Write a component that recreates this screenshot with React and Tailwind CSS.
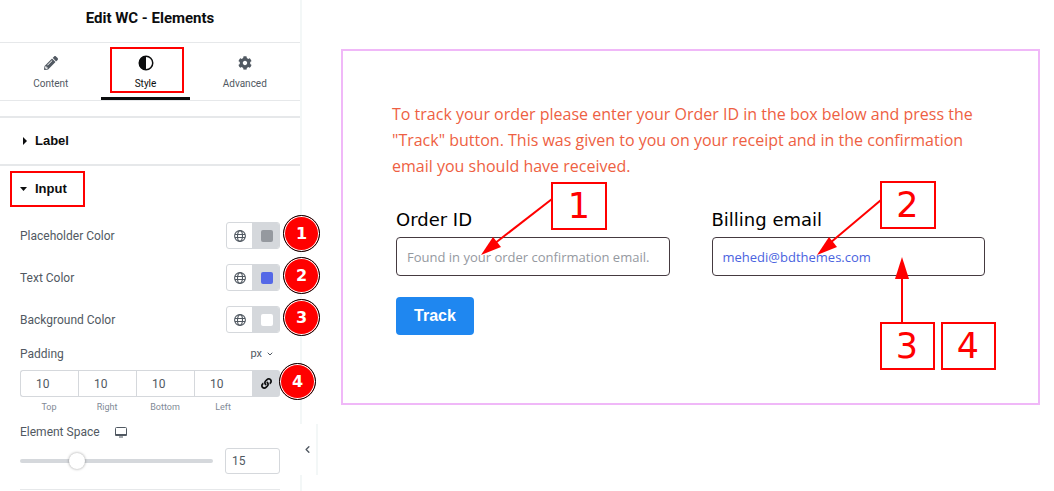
import { useState } from "react";
import { FaPencilAlt, FaCog, FaLink } from "react-icons/fa";
import { ChevronDown, ChevronLeft } from "lucide-react";

const colorControls = [
  { id: "placeholder", label: "Placeholder Color", color: "#95999f", badge: 1 },
  { id: "text", label: "Text Color", color: "#5468e7", badge: 2 },
  { id: "background", label: "Background Color", color: "#ffffff", badge: 3 },
];

const HalfCircle = () => (
  <svg width="16" height="16" viewBox="0 0 16 16" aria-hidden="true">
    <circle cx="8" cy="8" r="6.75" fill="none" stroke="currentColor" strokeWidth="1.5" />
    <path d="M8 1a7 7 0 0 0 0 14z" fill="currentColor" />
  </svg>
);

const Globe = () => (
  <svg width="12" height="12" viewBox="0 0 12 12" fill="none" stroke="currentColor" aria-hidden="true">
    <circle cx="6" cy="6" r="5.4" strokeWidth="1.1" />
    <ellipse cx="6" cy="6" rx="2.5" ry="5.4" strokeWidth="1.1" />
    <path d="M1 4.500h10M1 7.500h10" />
  </svg>
);

const Desktop = () => (
  <svg width="12" height="11" viewBox="0 0 12 11" aria-hidden="true">
    <path d="M1.500.5h9a1 1 0 0 1 1 1v7h-11v-7a1 1 0 0 1 1-1z" fill="none" stroke="currentColor" />
    <path d="M1 7h10v2H1zM4 9.500h4v1H4z" fill="currentColor" />
  </svg>
);

const Badge = ({ children, className }) => (
  <span
    className={`absolute -top-[7px] left-full z-10 flex size-[37px] items-center justify-center rounded-full border border-black bg-[#ff0000] font-['DejaVu_Sans'] text-base font-bold text-white ring-1 ring-inset ring-white ${className}`}
  >
    {children}
  </span>
);

const Callout = ({ children, className }) => (
  <span
    className={`absolute flex h-12 items-center justify-center border-2 border-[#ff0000] bg-white font-['DejaVu_Sans'] text-[35px] leading-none text-[#ff0000] ${className}`}
  >
    {children}
  </span>
);

const Tab = ({ icon, label, active, onClick }) => (
  <button
    type="button"
    onClick={onClick}
    className={`relative flex flex-auto flex-col items-center gap-[7px] border-b-3 pt-3 text-[10px] leading-3 ${
      active ? "border-[#0c0d0e] text-[#0c0d0e]" : "border-transparent text-[#515962]"
    }`}
  >
    <span className="flex h-4 items-center">{icon}</span>
    {label}
    {active && <span className="absolute top-1 left-[9px] h-[46px] w-[74px] border-2 border-[#ff0000]" />}
  </button>
);

const ColorControl = ({ id, label, color, badge }) => (
  <div className="relative flex items-center justify-between">
    <label htmlFor={id}>{label}</label>
    <div className="flex h-[27px] w-[54px] overflow-hidden rounded-[3px] border border-[#d5d8dc]">
      <button type="button" aria-label={`${label} globals`} className="flex flex-1 items-center justify-center">
        <Globe />
      </button>
      <button id={id} type="button" className="flex flex-1 items-center justify-center bg-[#d5d8dc] pl-0.5">
        <span className="size-3 rounded-xs" style={{ backgroundColor: color }} />
      </button>
    </div>
    <Badge className="ml-[3px]">{badge}</Badge>
  </div>
);

const Sidebar = () => {
  const [tab, setTab] = useState("Style");
  const [space, setSpace] = useState(15);
  const [padding, setPadding] = useState({ Top: 10, Right: 10, Bottom: 10, Left: 10 });

  const tabs = [
    { label: "Content", icon: <FaPencilAlt size={14} /> },
    { label: "Style", icon: <HalfCircle /> },
    { label: "Advanced", icon: <FaCog size={14} /> },
  ];

  return (
    <aside className="relative w-[302px] shrink-0 border-r-2 border-[#f3f7f7] text-xs text-[#515962]">
      <h1 className="border-b border-[#e6e8ea] pt-[5px] pb-[11px] text-center text-[15px] leading-[26px] font-bold text-[#0c0d0e]">
        Edit WC - Elements
      </h1>

      <nav className="flex h-[58px] border-b border-[#e6e8ea]">
        {tabs.map((t) => (
          <Tab key={t.label} {...t} active={tab === t.label} onClick={() => setTab(t.label)} />
        ))}
      </nav>

      <button
        type="button"
        className="mt-[15px] flex h-[50px] w-full items-center gap-2 border-y-2 border-[#e6e8ea] px-5 font-['Liberation_Sans'] text-[13px] font-bold text-[#0c0d0e]"
      >
        <svg width="7" height="8" viewBox="0 0 7 8" aria-hidden="true">
          <path d="M3 0l4 4-4 4z" fill="currentColor" />
        </svg>
        Label
      </button>

      <button
        type="button"
        className="relative flex h-[46px] w-full items-center gap-2 px-5 font-['Liberation_Sans'] text-[13px] font-bold text-[#0c0d0e]"
      >
        <svg width="7" height="8" viewBox="0 0 7 8" aria-hidden="true">
          <path d="M0 2h7L3.500 6z" fill="currentColor" />
        </svg>
        Input
        <span className="absolute left-2.5 h-9 w-[75px] border-2 border-[#ff0000]" />
      </button>

      <div className="px-5 pt-2.5">
        <div className="flex flex-col gap-[15px]">
          {colorControls.map((c) => (
            <ColorControl key={c.id} {...c} />
          ))}
        </div>

        <div className="mt-3 flex h-[18px] items-center justify-between">
          <span>Padding</span>
          <label className="relative text-[11px]">
            <select
              aria-label="Padding unit"
              className="field-sizing-content appearance-none bg-transparent pr-[18px] outline-none"
            >
              <option>px</option>
              <option>em</option>
              <option>%</option>
            </select>
            <ChevronDown
              size={8}
              strokeWidth={3}
              className="pointer-events-none absolute top-1/2 right-1.5 -translate-y-1/2"
            />
          </label>
        </div>
        <div className="relative mt-[7px] flex h-[27px]">
          <div className="flex flex-1 divide-x divide-[#d5d8dc] rounded-l-[3px] border border-r-0 border-[#d5d8dc]">
            {Object.keys(padding).map((side) => (
              <input
                key={side}
                id={`padding-${side}`}
                value={padding[side]}
                onChange={(e) => setPadding({ ...padding, [side]: e.target.value })}
                className="w-0 flex-1 pl-[15px] outline-none"
              />
            ))}
          </div>
          <button
            type="button"
            aria-label="Link values"
            className="flex w-7 items-center justify-center rounded-r-[3px] bg-[#d5d8dc] text-[#0c0d0e]"
          >
            <FaLink size={11} />
          </button>
          <Badge className="-ml-px">4</Badge>
        </div>
        <div className="mt-1 mr-7 flex text-center text-[9px] leading-3 text-[#818a96]">
          {Object.keys(padding).map((side) => (
            <label key={side} htmlFor={`padding-${side}`} className="flex-1">
              {side}
            </label>
          ))}
        </div>

        <div className="mt-2.5 flex h-[18px] items-center gap-[15px]">
          <label htmlFor="space">Element Space</label>
          <Desktop />
        </div>
        <div className="mt-[7px] flex items-center gap-3">
          <input
            id="space"
            type="range"
            min="0"
            max="54"
            value={space}
            onChange={(e) => setSpace(e.target.value)}
            className="h-1 min-w-0 flex-1 appearance-none rounded-full bg-[#d5d8dc] [&::-webkit-slider-thumb]:size-4 [&::-webkit-slider-thumb]:appearance-none [&::-webkit-slider-thumb]:rounded-full [&::-webkit-slider-thumb]:bg-white [&::-webkit-slider-thumb]:shadow-[0_0_3px_rgba(0,0,0,0.4)]"
          />
          <input
            aria-label="Element space value"
            value={space}
            onChange={(e) => setSpace(e.target.value)}
            className="h-[26px] w-[55px] rounded-[3px] border border-[#d5d8dc] px-1.5 outline-none"
          />
        </div>
        <hr className="mt-[15px] border-[#e6e8ea]" />
      </div>

      <button
        type="button"
        aria-label="Collapse panel"
        className="absolute bottom-4 left-full -ml-px flex h-[51px] w-[19px] items-center border-r-2 border-[#f3f7f7] bg-white pl-[3px]"
      >
        <ChevronLeft size={11} strokeWidth={3} />
      </button>
    </aside>
  );
};

const Preview = () => {
  const [order, setOrder] = useState("");
  const [email, setEmail] = useState("mehedi@bdthemes.com");

  const inputClass =
    "h-[39px] w-full rounded border border-[#453a40] px-2.5 font-['Open_Sans'] text-[13px] outline-none";
  const labelClass = "block pb-[3px] text-lg leading-[29px] text-black";

  return (
    <main className="flex-1 pt-[49px] pr-3.5 pl-[39px]">
      <form
        onSubmit={(e) => e.preventDefault()}
        className="border-2 border-[#f0b8f8] px-[53px] pt-[50px] pb-[68px]"
      >
        <p className="-mx-1 font-['Open_Sans'] text-base leading-[26px] text-[#ee5f43]">
          To track your order please enter your Order ID in the box below and press the "Track" button. This was given
          to you on your receipt and in the confirmation email you should have received.
        </p>

        <div className="mt-[26px] grid grid-cols-2 gap-[42px] font-['DejaVu_Sans']">
          <div className="relative">
            <label htmlFor="order" className={labelClass}>
              Order ID
            </label>
            <input
              id="order"
              value={order}
              onChange={(e) => setOrder(e.target.value)}
              placeholder="Found in your order confirmation email."
              className={`${inputClass} placeholder:text-[#95999f]`}
            />
            <svg
              className="pointer-events-none absolute bottom-5 left-[84px] text-[#ff0000]"
              width="74"
              height="60"
              viewBox="0 0 74 60"
              aria-hidden="true"
            >
              <path d="M72 3L14 48" stroke="currentColor" strokeWidth="2" />
              <path d="M1 59l12-18 8 10z" fill="currentColor" />
            </svg>
            <Callout className="bottom-[46px] left-[155px] w-14">1</Callout>
          </div>

          <div className="relative">
            <label htmlFor="email" className={labelClass}>
              Billing email
            </label>
            <input
              id="email"
              type="email"
              value={email}
              onChange={(e) => setEmail(e.target.value)}
              className={`${inputClass} text-[#4a63e0]`}
            />
            <svg
              className="pointer-events-none absolute bottom-5 left-[104px] text-[#ff0000]"
              width="66"
              height="60"
              viewBox="0 0 66 60"
              aria-hidden="true"
            >
              <path d="M65 4L14 47" stroke="currentColor" strokeWidth="2" />
              <path d="M1 59l12-18 8 10z" fill="currentColor" />
            </svg>
            <Callout className="bottom-[47px] left-[168px] w-14">2</Callout>
            <svg
              className="pointer-events-none absolute top-[52px] left-[183px] text-[#ff0000]"
              width="14"
              height="66"
              viewBox="0 0 14 66"
              aria-hidden="true"
            >
              <path d="M7 18v48" stroke="currentColor" strokeWidth="2" />
              <path d="M7 0l7 22H0z" fill="currentColor" />
            </svg>
            <Callout className="top-[117px] left-[168px] w-[55px]">3</Callout>
            <Callout className="top-[117px] left-[229px] w-[55px]">4</Callout>
          </div>
        </div>

        <button
          type="submit"
          className="mt-[21px] h-[38px] w-[78px] rounded bg-[#1f87f0] font-['Liberation_Sans'] text-base font-bold text-white"
        >
          Track
        </button>
      </form>
    </main>
  );
};

const App = () => (
  <div className="flex min-h-screen bg-white font-['Roboto',sans-serif]">
    <Sidebar />
    <Preview />
  </div>
);

export default App;
